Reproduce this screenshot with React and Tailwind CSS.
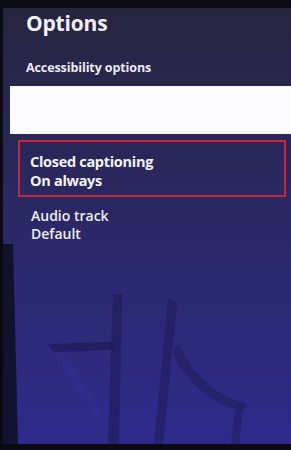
import React from "react";

const font = { fontFamily: '"Open Sans", "Liberation Sans", sans-serif' };

const App = () => {
  return (
    <div
      className="w-[291px] h-[450px] bg-[#0b0a12] pt-2 pb-[6px] pl-[3px] overflow-hidden"
      style={font}
    >
      <div className="relative h-full bg-gradient-to-b from-[#27243f] via-[#2a2866] to-[#2e2a8c] overflow-hidden">
        {/* blurred wallpaper behind the menu */}
        <svg
          className="absolute left-0 bottom-0"
          width="288"
          height="200"
          viewBox="0 0 288 200"
        >
          <path d="M0 0 L10 0 L15 200 L0 200 Z" fill="#0d0c1c" opacity="0.8" />
          <path d="M45 100 L110 98 L112 106 L50 108 Z" fill="#1c1950" opacity="0.6" />
          <path d="M110 50 L119 50 L116 200 L105 200 Z" fill="#1d1a55" opacity="0.55" />
          <path d="M165 55 L174 58 L160 200 L151 200 Z" fill="#1d1a55" opacity="0.5" />
          <path d="M175 100 Q200 150 245 160 L240 167 Q195 158 170 110 Z" fill="#1d1a55" opacity="0.5" />
          <path d="M50 108 L90 170 L100 170 L60 108 Z" fill="#3a35a0" opacity="0.25" />
          <path d="M232 165 L240 165 L236 200 L228 200 Z" fill="#1d1a55" opacity="0.45" />
        </svg>

        <div className="relative flex flex-col">
          <h1 className="pl-[23px] pt-[1px] text-[21px] leading-[28px] font-bold text-[#f2f0fa] tracking-[-0.2px]">
            Options
          </h1>
          <p className="pl-[23px] mt-[24px] text-[12.5px] leading-[14px] font-bold text-[#ecebf5] tracking-[-0.1px]">
            Accessibility options
          </p>
          <div className="ml-[7px] mt-[11px] h-[48px] bg-[#fbfbfd]" />
          <div className="ml-[15px] mr-[5px] mt-[6px] h-[57px] border-2 border-[#c4253a] flex flex-col justify-center pl-[10px] pt-[4px]">
            <span className="text-[14.5px] leading-[19px] font-bold text-[#f4f3fb] tracking-[-0.3px]">
              Closed captioning
            </span>
            <span className="text-[14.5px] leading-[19px] font-bold text-[#f4f3fb] tracking-[-0.3px]">
              On always
            </span>
          </div>
          <div className="pl-[28px] mt-[10px] flex flex-col gap-[1px]">
            <span className="text-[14px] leading-[17px] font-semibold text-[#eeedf7]">
              Audio track
            </span>
            <span className="text-[14px] leading-[17px] font-semibold text-[#eeedf7]">
              Default
            </span>
          </div>
        </div>
      </div>
    </div>
  );
};

export default App;
